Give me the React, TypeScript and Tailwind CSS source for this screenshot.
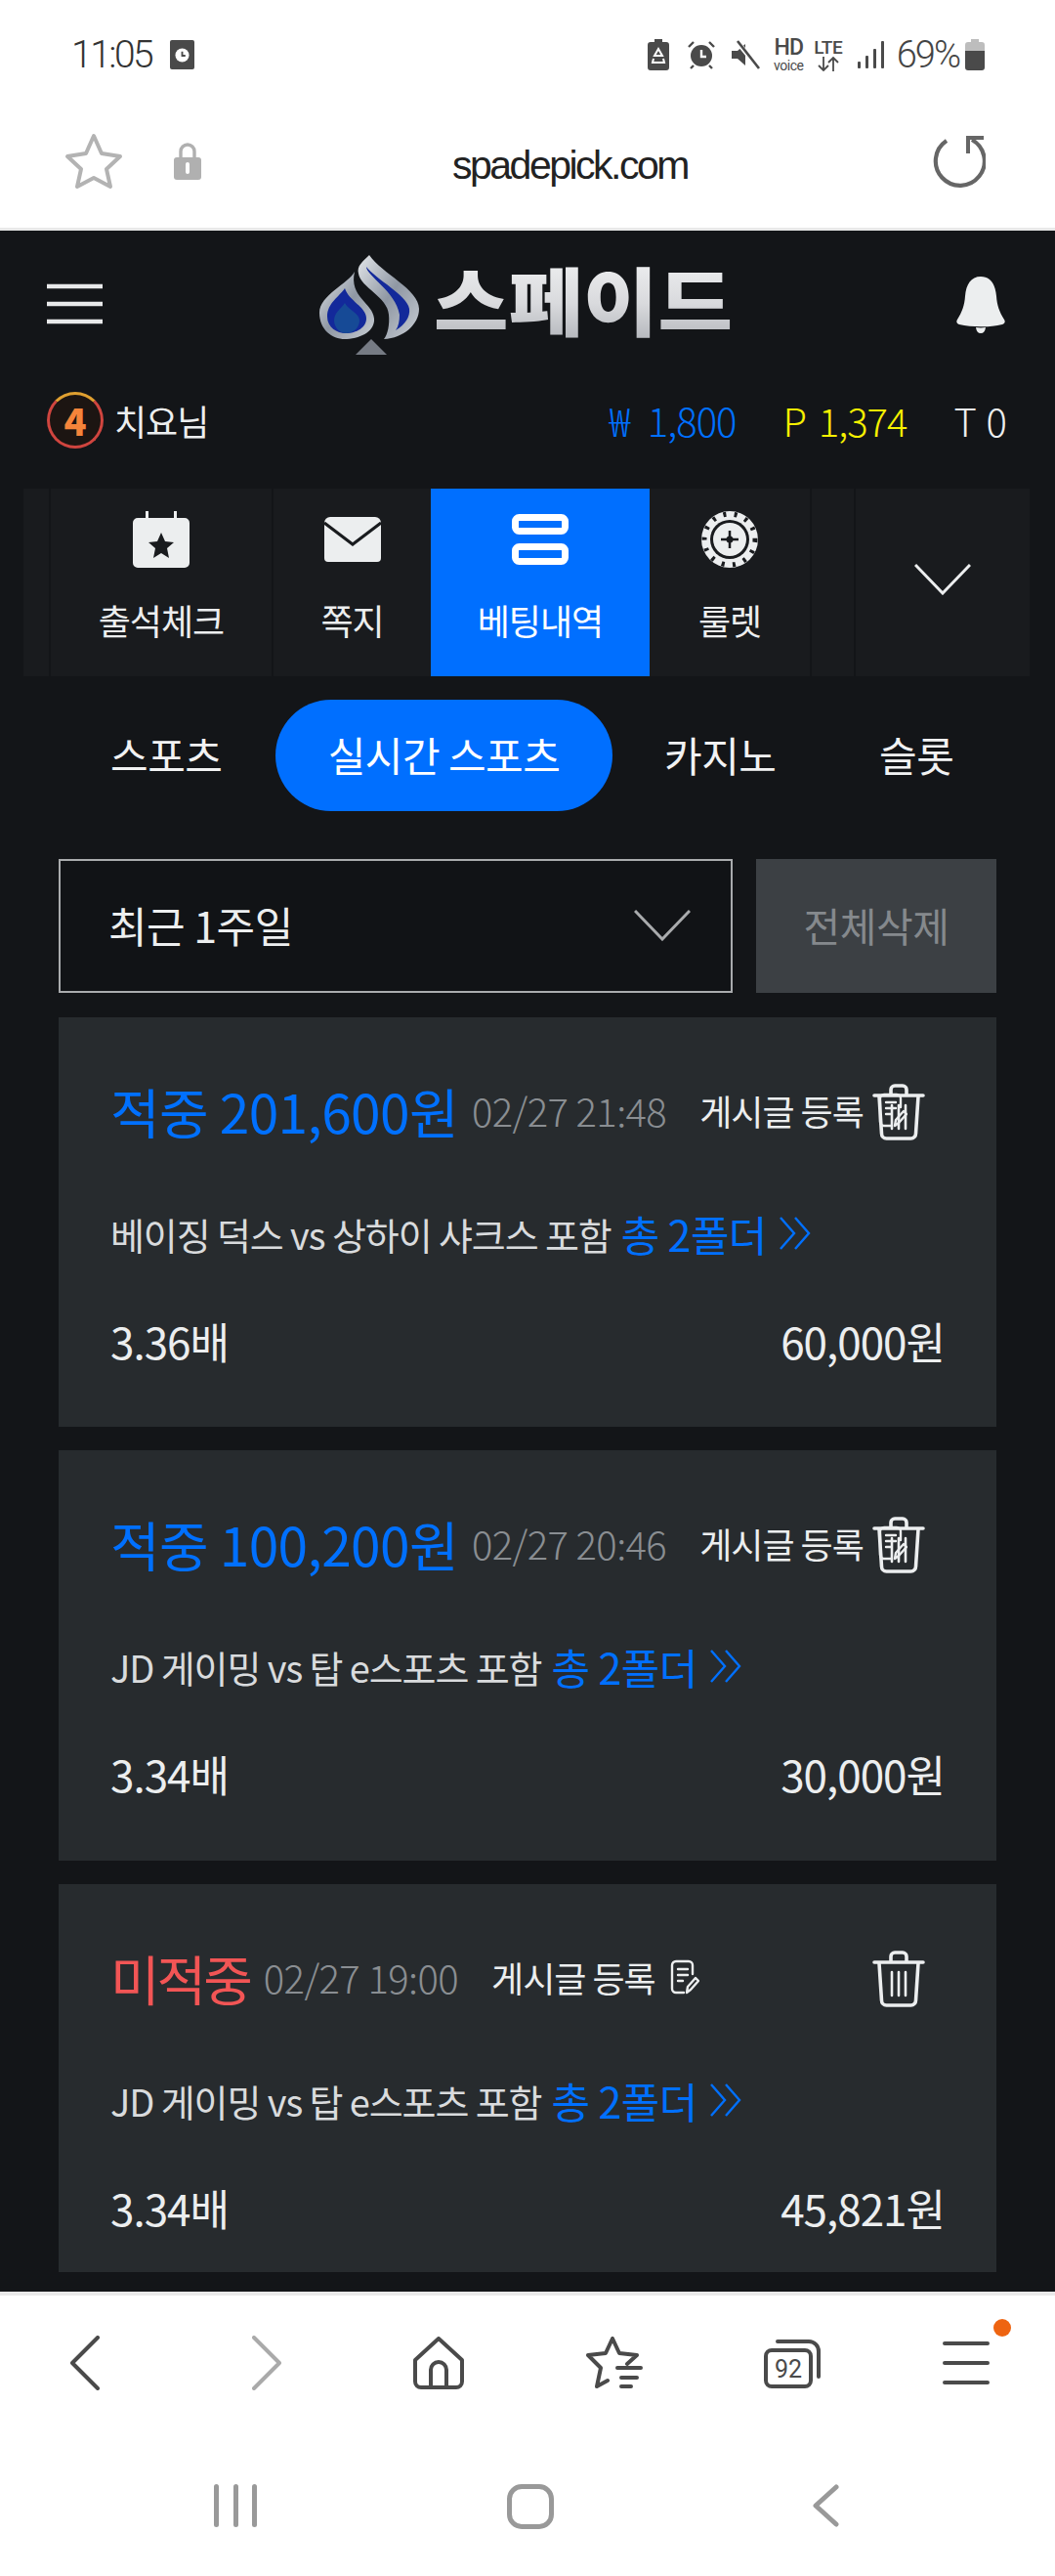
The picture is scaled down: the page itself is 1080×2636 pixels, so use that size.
import type { ReactNode } from "react";

const bets = [
  { title: "적중 201,600원", hit: true, date: "02/27 21:48", match: "베이징 덕스 vs 상하이 샤크스 포함", odds: "3.36배", amount: "60,000원", bottom: "pb-[59px]" },
  { title: "적중 100,200원", hit: true, date: "02/27 20:46", match: "JD 게이밍 vs 탑 e스포츠 포함", odds: "3.34배", amount: "30,000원", bottom: "pb-[60px]" },
  { title: "미적중", hit: false, date: "02/27 19:00", match: "JD 게이밍 vs 탑 e스포츠 포함", odds: "3.34배", amount: "45,821원", bottom: "pb-[37px]" },
];

function Hamburger({ className }: { className: string }) {
  return (
    <svg className={className} viewBox="0 0 57 42" fill="none" stroke="currentColor" strokeWidth="4.5">
      <path d="M0 3h57M0 21h57M0 39h57" />
    </svg>
  );
}

function Logo() {
  return (
    <svg className="h-[105px] w-[425px] overflow-visible" viewBox="0 0 425 105">
      <defs>
        <linearGradient id="silver" x1="0" y1="0" x2="0" y2="1">
          <stop offset="0" stopColor="#f4f5f6" />
          <stop offset="0.55" stopColor="#d9dadd" />
          <stop offset="1" stopColor="#a9acb2" />
        </linearGradient>
        <linearGradient id="rim" x1="0" y1="0" x2="1" y2="1">
          <stop offset="0" stopColor="#e4e7ea" />
          <stop offset="0.5" stopColor="#8f97a3" />
          <stop offset="1" stopColor="#c9ced4" />
        </linearGradient>
      </defs>
      <path d="M36 18C30 30 0 42 0 60C0 78 14 88 28 87C44 86 57 78 56 66C55 50 30 44 36 18Z" fill="url(#rim)" />
      <path d="M26 35C20 44 8 50 8 64C8 75 18 81 27 81C38 81 48 75 48 66C48 54 30 48 26 35Z" fill="#13299a" />
      <path d="M26 50C22 56 15 60 15 68C15 75 21 81 27 81C35 81 41 75 41 68C41 60 30 58 26 50Z" fill="#164a96" />
      <path d="M51 1C44 8 38 12 40 20C42 34 70 44 71 62C72 72 70 82 66 87C86 86 102 72 102 56C102 36 64 20 51 1Z" fill="url(#rim)" />
      <path d="M48 13C48 22 78 38 82 62C82 68 81 74 78 78C88 72 93 64 92 56C90 42 58 26 48 13Z" fill="#13299a" />
      <path d="M53 87L69 103H37Z" fill="#767b84" />
      <text
        x="117"
        y="78"
        fontFamily="'Noto Sans CJK KR',sans-serif"
        fontWeight="900"
        fontSize="76"
        textLength="306"
        lengthAdjust="spacingAndGlyphs"
        fill="url(#silver)"
      >
        스페이드
      </text>
    </svg>
  );
}

function NavCell({ label, icon, active, className }: { label: string; icon: ReactNode; active?: boolean; className: string }) {
  return (
    <div className={`flex h-full flex-col items-center ${active ? "bg-[#006fff] text-white" : "bg-[#191b1e] text-[#eceeef]"} ${className}`}>
      <div className="flex h-[81px] items-end">{icon}</div>
      <span className="mt-[31px] text-[36px] leading-[44px] tracking-[-1px]">{label}</span>
    </div>
  );
}

function TrashIcon() {
  return (
    <svg className="h-[58px] w-[54px]" viewBox="0 0 54 58" fill="none" stroke="#eceeef" strokeWidth="3.6" strokeLinecap="round" strokeLinejoin="round">
      <path d="M2 12h50M19 11V6a4 4 0 0 1 4-4h8a4 4 0 0 1 4 4v5" />
      <path d="M7 13l2.5 38a5 5 0 0 0 5 5h25a5 5 0 0 0 5-5L47 13" />
      <path d="M20 22v24M27 22v24M34 22v24" strokeWidth="2.6" />
    </svg>
  );
}

function EditIcon() {
  return (
    <svg className="h-[36px] w-[30px]" viewBox="0 0 30 36" fill="none" stroke="#eceeef" strokeWidth="2.4" strokeLinecap="round" strokeLinejoin="round">
      <path d="M23 15V6a4 4 0 0 0-4-4H6a4 4 0 0 0-4 4v24a4 4 0 0 0 4 4h8" />
      <path d="M8 10h10M8 16h10M8 22h5" />
      <path d="M17 34l1-6 8-9 3 3-8 9z" />
    </svg>
  );
}

function BetCard({ bet }: { bet: (typeof bets)[number] }) {
  return (
    <div className={`bg-[#272b2e] px-[53px] pt-[66px] ${bet.bottom}`}>
      <div className="relative flex h-[58px] items-center">
        <span className={`text-[55px] leading-[58px] ${bet.hit ? "tracking-[-0.6px] text-[#0070ff]" : "tracking-[-3px] text-[#f25555]"}`}>{bet.title}</span>
        <span className="ml-[14px] text-[40px] font-light tracking-[-0.6px] text-[#8a8e92]">{bet.date}</span>
        <span className="ml-[34px] text-[36px] tracking-[-1px] text-[#eceeef]">게시글 등록</span>
        <span className="ml-[15px] flex"><EditIcon /></span>
        <span className="absolute right-[20px] top-[2px] flex"><TrashIcon /></span>
      </div>
      <div className="mt-[68px] flex h-[58px] items-center text-[38px] tracking-[-1.1px] text-[#d9dbdd]">
        <span>{bet.match}</span>
        <span className="ml-[10px] text-[43px] tracking-[-0.6px] text-[#0070ff]">총 2폴더</span>
        <svg className="ml-[12px] h-[34px] w-[34px]" viewBox="0 0 34 34" fill="none" stroke="#0070ff" strokeWidth="2.4">
          <path d="M2 1l14 16L2 33M17 1l14 16-14 16" />
        </svg>
      </div>
      <div className="mt-[52px] flex h-[58px] items-center justify-between text-[44px] tracking-[-1px] text-[#eceeef]">
        <span>{bet.odds}</span>
        <span>{bet.amount}</span>
      </div>
    </div>
  );
}

function StatusIcons() {
  return (
    <div className="flex items-center text-[#4a4a4a]">
      <svg className="h-[32px] w-[22px]" viewBox="0 0 22 32" fill="currentColor">
        <path d="M7 0h8v3h4a3 3 0 0 1 3 3v23a3 3 0 0 1-3 3H3a3 3 0 0 1-3-3V6a3 3 0 0 1 3-3h4z" />
        <path d="M11 10l-4 7h8zM6 20l-1 4h12l-1-4" fill="none" stroke="#fff" strokeWidth="2" />
      </svg>
      <svg className="ml-[18px] h-[30px] w-[30px]" viewBox="0 0 30 30" fill="currentColor">
        <circle cx="15" cy="16" r="11" />
        <path d="M15 10v7h5" fill="none" stroke="#fff" strokeWidth="2.4" />
        <path d="M2 7l5-5M28 7l-5-5M7 26l-3 3M23 26l3 3" fill="none" stroke="currentColor" strokeWidth="2.4" />
      </svg>
      <svg className="ml-[15px] h-[30px] w-[30px]" viewBox="0 0 30 30" fill="currentColor">
        <path d="M1 11h6L15 4v22l-8-7H1z" />
        <path d="M6 1l23 28" stroke="#fff" strokeWidth="5" />
        <path d="M7 1l22 28" stroke="currentColor" strokeWidth="2.6" />
      </svg>
      <div className="ml-[13px] flex w-[33px] flex-col items-center font-['Roboto',sans-serif]">
        <span className="text-[23px] font-medium leading-[22px] tracking-[-1px]">HD</span>
        <span className="text-[14px] leading-[14px] tracking-[-0.5px]">voice</span>
      </div>
      <div className="ml-[6px] flex w-[36px] flex-col items-center font-['Roboto',sans-serif]">
        <span className="text-[19px] font-medium leading-[19px] tracking-[-0.5px]">LTE</span>
        <svg className="h-[15px] w-[22px]" viewBox="0 0 22 15" fill="none" stroke="currentColor" strokeWidth="1.8">
          <path d="M6 0v14M1 9l5 5 5-5M16 15V1M11 6l5-5 5 5" />
        </svg>
      </div>
      <svg className="ml-[12px] h-[28px] w-[28px]" viewBox="0 0 28 28" fill="currentColor">
        <rect x="0" y="21" width="3" height="7" rx="1" />
        <rect x="8" y="15" width="3" height="13" rx="1" />
        <rect x="16" y="8" width="3" height="20" rx="1" />
        <rect x="24" y="0" width="3" height="28" rx="1" />
      </svg>
      <span className="ml-[12px] font-['Roboto',sans-serif] text-[38px] font-light leading-none tracking-[-2px] text-[#444]">69%</span>
      <svg className="ml-[6px] h-[32px] w-[20px]" viewBox="0 0 20 32">
        <path d="M6 0h8v3h3a3 3 0 0 1 3 3v6H0V6a3 3 0 0 1 3-3h3z" fill="#bdbdbd" />
        <path d="M0 12h20v17a3 3 0 0 1-3 3H3a3 3 0 0 1-3-3z" fill="#4a4a4a" />
      </svg>
    </div>
  );
}

export default function App() {
  return (
    <div className="flex h-[2636px] w-[1080px] flex-col overflow-hidden bg-white font-['Noto_Sans_CJK_KR','Noto_Sans',sans-serif]">
      {/* status bar */}
      <div className="flex h-[112px] items-center justify-between pl-[73px] pr-[72px]">
        <div className="flex items-center">
          <span className="font-['Roboto',sans-serif] text-[39px] font-light leading-none tracking-[-2.5px] text-[#333]">11:05</span>
          <span className="ml-[19px] flex h-[30px] w-[25px] items-center justify-center rounded-[2px] bg-[#4a4a4a]">
            <svg className="h-[15px] w-[15px]" viewBox="0 0 16 16" fill="none">
              <circle cx="8" cy="8" r="7.5" fill="#fff" />
              <path d="M8 4v4.5h3.5" stroke="#4a4a4a" strokeWidth="2" />
            </svg>
          </span>
        </div>
        <StatusIcons />
      </div>

      {/* address bar */}
      <div className="flex h-[121px] items-center pb-[16px]">
        <svg className="ml-[66px] h-[58px] w-[60px]" viewBox="0 0 60 58" fill="none" stroke="#b3b3b3" strokeWidth="4" strokeLinejoin="round">
          <path d="M30 3l8 18 19 3-14 13 4 18-17-9-17 9 4-18L3 24l19-3z" />
        </svg>
        <svg className="ml-[52px] h-[38px] w-[28px]" viewBox="0 0 28 38" fill="#b0b0b0">
          <path d="M7 16V9a7 7 0 0 1 14 0v7" fill="none" stroke="#b0b0b0" strokeWidth="3.4" />
          <path d="M3 15h22a3 3 0 0 1 3 3v17a3 3 0 0 1-3 3H3a3 3 0 0 1-3-3V18a3 3 0 0 1 3-3z" />
          <path d="M14 22v8" stroke="#fff" strokeWidth="4" strokeLinecap="round" />
        </svg>
        <span className="ml-[257px] mt-[8px] font-['Liberation_Sans',sans-serif] text-[41px] leading-[50px] tracking-[-2.5px] text-[#222]">spadepick.com</span>
        <svg className="ml-[251px] h-[54px] w-[54px]" viewBox="0 0 54 54" fill="none" stroke="#666" strokeWidth="4.2">
          <path d="M14 6A25 25 0 1 0 40 5" />
          <path d="M36 19V3h16" strokeWidth="4" />
        </svg>
      </div>

      <div className="h-[3px] bg-[#e9e9e9]" />

      {/* site */}
      <div className="flex h-[2109px] flex-col overflow-hidden bg-[#131518]">
        <div className="relative flex h-[144px] items-center justify-between pl-[48px] pr-[50px] text-[#e8e9ea]">
          <Hamburger className="mt-[6px] h-[42px] w-[57px]" />
          <div className="absolute left-[327px] top-[24px] flex">
            <Logo />
          </div>
          <svg className="mt-[8px] h-[58px] w-[52px]" viewBox="0 0 52 58" fill="#eceeef">
            <path d="M26 0c10 0 15 8 16 20 .6 9 3 16 8 24 1.400 2 .6 4-2 5-13 3-31 3-44 0-2.600-1-3.400-3-2-5 5-8 7.400-15 8-24C11 8 16 0 26 0z" />
            <path d="M21 52c3 .5 7 .5 10 0-.6 4-2 6-5 6s-4.400-2-5-6z" />
          </svg>
        </div>

        <div className="flex h-[120px] items-center justify-between pb-[20px] pl-[48px] pr-[50px] text-[40px]">
          <div className="flex items-center">
            <div className="flex h-[58px] w-[58px] items-center justify-center rounded-full border-[3px] border-[#d0453f] border-t-[#e0a030] bg-[#1c1512] text-[38px] font-black leading-none text-[#f5843a]">4</div>
            <span className="ml-[11px] text-[36px] tracking-[-1px] text-[#eceeef]">치요님</span>
          </div>
          <div className="flex items-center font-light tracking-[-1px]">
            <span className="text-[#0070ff] [word-spacing:11px]">₩ 1,800</span>
            <span className="ml-[48px] text-[#f6f000] [word-spacing:5px]">P 1,374</span>
            <span className="ml-[48px] text-[#eceeef] [word-spacing:3px]">T 0</span>
          </div>
        </div>

        {/* quick menu */}
        <div className="ml-[24px] flex h-[192px] w-[1032px] gap-[2px]">
          <div className="h-full w-[26px] bg-[#191b1e]" />
          <NavCell
            className="w-[226px]"
            label="출석체크"
            icon={
              <svg className="h-[58px] w-[58px]" viewBox="0 0 58 58">
                <path d="M13 0h3v7h26V0h3v7h8a5 5 0 0 1 5 5v41a5 5 0 0 1-5 5H5a5 5 0 0 1-5-5V12a5 5 0 0 1 5-5h8z" fill="#eceeef" />
                <path d="M29 22l4 9 9 1-7 6 2 10-8-5-8 5 2-10-7-6 9-1z" fill="#191b1e" />
              </svg>
            }
          />
          <NavCell
            className="w-[161px]"
            label="쪽지"
            icon={
              <svg className="mb-[6px] h-[46px] w-[58px]" viewBox="0 0 58 46">
                <path d="M6 0h46a6 6 0 0 1 6 6v36a4 4 0 0 1-4 4H4a4 4 0 0 1-4-4V6a6 6 0 0 1 6-6z" fill="#eceeef" />
                <path d="M0 6l29 22L58 6" fill="none" stroke="#191b1e" strokeWidth="3" />
              </svg>
            }
          />
          <NavCell
            active
            className="-ml-[2px] w-[224px]"
            label="베팅내역"
            icon={
              <svg className="mb-[3px] h-[52px] w-[58px]" viewBox="0 0 58 52" fill="none" stroke="#fff" strokeWidth="7">
                <rect x="3.500" y="3.500" width="51" height="14" rx="4" />
                <rect x="3.500" y="33.500" width="51" height="15" rx="4" />
              </svg>
            }
          />
          <NavCell
            className="-ml-[2px] w-[164px]"
            label="룰렛"
            icon={
              <svg className="h-[58px] w-[58px]" viewBox="0 0 58 58">
                <circle cx="29" cy="29" r="29" fill="#eceeef" />
                <circle cx="29" cy="29" r="26" fill="none" stroke="#191b1e" strokeWidth="5" strokeDasharray="3 8.500" />
                <circle cx="29" cy="29" r="20" fill="#191b1e" />
                <circle cx="29" cy="29" r="17" fill="#eceeef" />
                <path d="M29 20v18M20 29h18" stroke="#191b1e" strokeWidth="2.500" />
                <circle cx="29" cy="29" r="3.500" fill="#191b1e" />
              </svg>
            }
          />
          <div className="h-full w-[43px] bg-[#191b1e]" />
          <div className="flex h-full w-[178px] items-center justify-center bg-[#191b1e]">
            <svg className="mt-[-6px] h-[32px] w-[58px]" viewBox="0 0 58 32" fill="none" stroke="#eceeef" strokeWidth="3">
              <path d="M1 1l28 29L57 1" />
            </svg>
          </div>
        </div>

        {/* category tabs */}
        <div className="relative mt-[24px] flex h-[114px] items-center text-[42px] tracking-[-0.5px] text-[#f1f2f3]">
          <span className="absolute left-[113px] -mt-[4px]">스포츠</span>
          <span className="absolute left-[282px] flex h-[114px] w-[345px] items-center justify-center rounded-full bg-[#006fff] pb-[4px] text-white">실시간 스포츠</span>
          <span className="absolute left-[680px] -mt-[4px]">카지노</span>
          <span className="absolute left-[900px] -mt-[4px]">슬롯</span>
        </div>

        {/* filter */}
        <div className="mt-[49px] flex h-[137px] px-[60px]">
          <div className="flex w-[690px] items-center justify-between border-2 border-[#a9abad] bg-[#111316] pb-[2px] pl-[49px] pr-[41px]">
            <span className="text-[43px] tracking-[-0.5px] text-[#eceeef]">최근 1주일</span>
            <svg className="h-[32px] w-[58px]" viewBox="0 0 58 32" fill="none" stroke="#a9abad" strokeWidth="3">
              <path d="M1 1l28 29L57 1" />
            </svg>
          </div>
          <div className="ml-[24px] flex w-[246px] items-center justify-center bg-[#3c4044] pb-[2px] text-[41px] tracking-[-0.5px] text-[#85898d]">전체삭제</div>
        </div>

        {/* bet list */}
        <div className="mt-[25px] flex flex-col gap-[24px] px-[60px]">
          {bets.map((bet) => (
            <BetCard key={bet.date} bet={bet} />
          ))}
        </div>
      </div>

      {/* browser toolbar */}
      <div className="h-[4px] bg-[#e9e9e9]" />
      <div className="relative flex h-[130px] items-center pt-[8px] text-[#4a4a4a]">
        <svg className="ml-[72px] h-[56px] w-[30px]" viewBox="0 0 30 56" fill="none" stroke="#4a4a4a" strokeWidth="4" strokeLinecap="round" strokeLinejoin="round">
          <path d="M28 2L2 28l26 26" />
        </svg>
        <svg className="ml-[156px] h-[56px] w-[30px]" viewBox="0 0 30 56" fill="none" stroke="#aaa" strokeWidth="4" strokeLinecap="round" strokeLinejoin="round">
          <path d="M2 2l26 26L2 54" />
        </svg>
        <svg className="ml-[135px] h-[54px] w-[52px]" viewBox="0 0 52 54" fill="none" stroke="#4a4a4a" strokeWidth="4" strokeLinejoin="round">
          <path d="M26 2L2 24v22a6 6 0 0 0 6 6h36a6 6 0 0 0 6-6V24zM18 52V34a8 8 0 0 1 16 0v18" />
        </svg>
        <svg className="ml-[125px] h-[54px] w-[58px]" viewBox="0 0 58 54" fill="none" stroke="#4a4a4a" strokeWidth="4" strokeLinecap="round" strokeLinejoin="round">
          <path d="M27 2l7 15 18 2-10 9M27 2l-7 15-18 2 13 13-4 19 11-6" />
          <path d="M32 32h24M36 42h16M36 51h10" />
        </svg>
        <svg className="ml-[124px] h-[52px] w-[58px]" viewBox="0 0 58 52" fill="none" stroke="#4a4a4a" strokeWidth="4" strokeLinejoin="round">
          <rect x="2" y="13" width="46" height="37" rx="6" />
          <path d="M14 4h32a10 10 0 0 1 10 10v26" strokeLinecap="round" />
          <text x="25" y="41" textAnchor="middle" fontSize="25" fontFamily="Roboto,sans-serif" fill="#4a4a4a" stroke="none">92</text>
        </svg>
        <svg className="ml-[125px] h-[48px] w-[48px]" viewBox="0 0 48 48" fill="none" stroke="#4a4a4a" strokeWidth="4" strokeLinecap="round">
          <path d="M2 4h44M2 24h44M2 44h44" />
        </svg>
        <span className="absolute left-[1017px] top-[24px] h-[18px] w-[18px] rounded-full bg-[#ee6411]" />
      </div>

      {/* system nav */}
      <div className="flex flex-1 items-start pt-[63px]">
        <div className="ml-[219px] flex h-[44px] w-[44px] justify-between">
          <span className="w-[5px] rounded-full bg-[#999]" />
          <span className="w-[5px] rounded-full bg-[#999]" />
          <span className="w-[5px] rounded-full bg-[#999]" />
        </div>
        <span className="ml-[256px] h-[46px] w-[48px] rounded-[15px] border-[5px] border-[#999]" />
        <svg className="ml-[264px] h-[44px] w-[28px]" viewBox="0 0 28 44" fill="none" stroke="#999" strokeWidth="5" strokeLinecap="round" strokeLinejoin="round">
          <path d="M25 3L4 22l21 19" />
        </svg>
      </div>
    </div>
  );
}
